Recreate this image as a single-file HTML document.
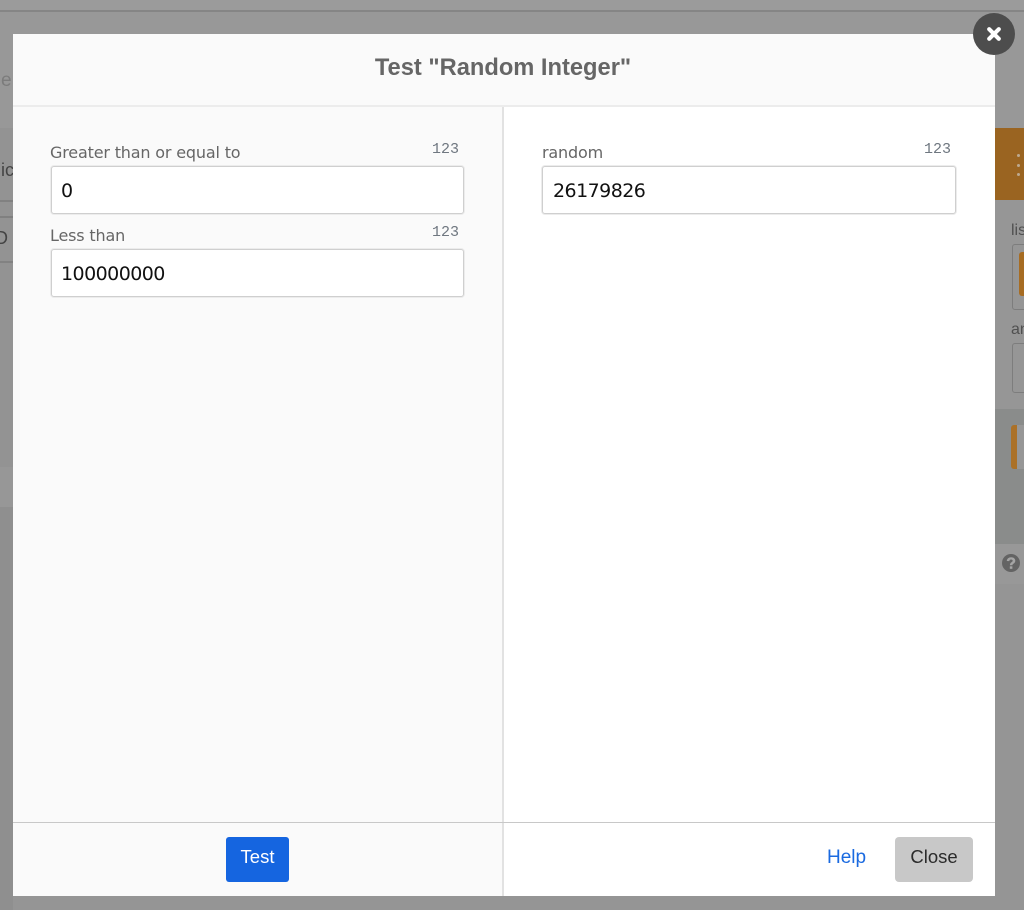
<!DOCTYPE html>
<html>
<head>
<meta charset="utf-8">
<style>
html,body{margin:0;padding:0;}
body{position:relative;width:1024px;height:910px;overflow:hidden;background:#959595;font-family:"Liberation Sans",sans-serif;}
.a{position:absolute;}
.t{position:absolute;white-space:nowrap;}
.lab{font-size:16px;line-height:20px;color:#666;font-family:"DejaVu Sans","Liberation Sans",sans-serif;letter-spacing:-.17px;}
.num{font-size:15px;line-height:16px;color:#6f7780;font-family:"Liberation Mono",monospace;}
.inp{position:absolute;box-sizing:border-box;height:48px;background:#fff;border:1px solid #cfcfcf;box-shadow:0 0 0 1px #ececec;border-radius:3px;font-family:"DejaVu Sans","Liberation Sans",sans-serif;font-size:19px;line-height:48px;color:#111;padding-left:9px;letter-spacing:-.55px;}
</style>
</head>
<body>
<!-- background app -->
<div class="a" style="left:0;top:0;width:1024px;height:10px;background:#9b9b9b"></div>
<div class="a" style="left:0;top:10px;width:1024px;height:2px;background:#858585"></div>
<div class="a" style="left:0;top:12px;width:1024px;height:116px;background:#989898"></div>
<div class="a" style="left:0;top:128px;width:13px;height:379px;background:#939393"></div>
<div class="a" style="left:0;top:200px;width:13px;height:2px;background:#818181"></div>
<div class="a" style="left:0;top:216px;width:13px;height:2px;background:#808080"></div>
<div class="a" style="left:0;top:261px;width:13px;height:2px;background:#828282"></div>
<div class="a" style="left:0;top:467px;width:13px;height:40px;background:#979797"></div>
<div class="a" style="left:0;top:507px;width:13px;height:403px;background:#8f8f8f"></div>
<div class="t" style="left:1px;top:70px;font-size:19px;color:#7c7c7c">e</div>
<div class="t" style="left:-9px;top:160px;font-size:18px;color:#444">nic</div>
<div class="t" style="left:-5px;top:228px;font-size:18px;color:#444">D</div>

<div class="a" style="left:995px;top:128px;width:29px;height:72px;background:#9a6421"></div>
<div class="a" style="left:1017px;top:154px;width:3px;height:3px;border-radius:50%;background:#bda98f"></div>
<div class="a" style="left:1017px;top:164px;width:3px;height:3px;border-radius:50%;background:#bda98f"></div>
<div class="a" style="left:1017px;top:173px;width:3px;height:3px;border-radius:50%;background:#bda98f"></div>
<div class="a" style="left:995px;top:200px;width:29px;height:209px;background:#969696"></div>
<div class="t" style="left:1011px;top:222px;font-size:16px;color:#505050">list</div>
<div class="a" style="left:1012px;top:244px;width:20px;height:66px;box-sizing:border-box;border:1px solid #7d7d7d;border-radius:3px"></div>
<div class="a" style="left:1019px;top:252px;width:10px;height:44px;background:#a76c22;border-radius:3px"></div>
<div class="t" style="left:1011px;top:321px;font-size:16px;color:#505050">an</div>
<div class="a" style="left:1012px;top:343px;width:20px;height:50px;box-sizing:border-box;border:1px solid #7d7d7d;border-radius:3px"></div>
<div class="a" style="left:995px;top:409px;width:29px;height:135px;background:#8a8c8b"></div>
<div class="a" style="left:1011px;top:425px;width:6px;height:44px;background:#ab7128;border-radius:3px 0 0 3px"></div>
<div class="a" style="left:1017px;top:425px;width:7px;height:44px;background:#979797"></div>
<div class="a" style="left:995px;top:544px;width:29px;height:40px;background:#989898"></div>
<svg class="a" style="left:1002px;top:554px" width="18" height="18" viewBox="0 0 18 18"><circle cx="9" cy="9" r="9" fill="#636363"/><path d="M4.800 7C5 4.700 6.800 3.300 9.100 3.300c2.500 0 4.200 1.400 4.200 3.500 0 2.800-2.900 2.800-2.900 4.500H7.900c0-3.100 2.800-3 2.800-4.500 0-.8-.7-1.300-1.600-1.300-1 0-1.600.6-1.800 1.600z" fill="#a5a5a5"/><rect x="7.800" y="12.300" width="2.600" height="2.500" fill="#a5a5a5"/></svg>

<!-- modal -->
<div class="a" style="left:13px;top:34px;width:982px;height:862px;background:#fff"></div>
<div class="a" style="left:13px;top:34px;width:982px;height:71px;background:#fafafa"></div>
<div class="a" style="left:13px;top:105px;width:982px;height:1.500px;background:#ececec"></div>
<div class="a" style="left:13px;top:107px;width:489px;height:789px;background:#fafafa"></div>
<div class="a" style="left:502px;top:107px;width:1.500px;height:789px;background:#e2e2e2"></div>
<div class="a" style="left:13px;top:822px;width:982px;height:1px;background:#c8c8c8"></div>

<div class="t" style="left:12px;width:982px;top:53px;text-align:center;font-size:23.700px;line-height:30px;font-weight:bold;color:#666">Test "Random Integer"</div>

<div class="t lab" style="left:50px;top:143px">Greater than or equal to</div>
<div class="t num" style="left:432px;top:142px">123</div>
<div class="inp" style="left:51px;top:166px;width:413px">0</div>
<div class="t lab" style="left:50px;top:226px">Less than</div>
<div class="t num" style="left:432px;top:225px">123</div>
<div class="inp" style="left:51px;top:249px;width:413px">100000000</div>

<div class="t lab" style="left:542px;top:143px">random</div>
<div class="t num" style="left:924px;top:142px">123</div>
<div class="inp" style="left:542px;top:166px;width:414px;padding-left:10px">26179826</div>

<div class="a" style="left:226px;top:837px;width:63px;height:45px;background:#1565e0;border-radius:3px;color:#fff;font-size:18.500px;line-height:40px;text-align:center">Test</div>
<div class="t" style="left:827px;top:847px;font-size:19px;line-height:22px;color:#1a6ae0">Help</div>
<div class="a" style="left:895px;top:837px;width:78px;height:45px;background:#c8c8c8;border-radius:4px;color:#2b2b2b;font-size:18.500px;line-height:40px;text-align:center">Close</div>

<!-- close circle -->
<svg class="a" style="left:973px;top:12px" width="42" height="43" viewBox="0 0 42 43"><circle cx="21" cy="22" r="21" fill="#4d4d4d"/><path d="M16.200 17.200L25.800 26.800M25.800 17.200L16.200 26.800" stroke="#fff" stroke-width="4.200" stroke-linecap="round"/></svg>
</body>
</html>
